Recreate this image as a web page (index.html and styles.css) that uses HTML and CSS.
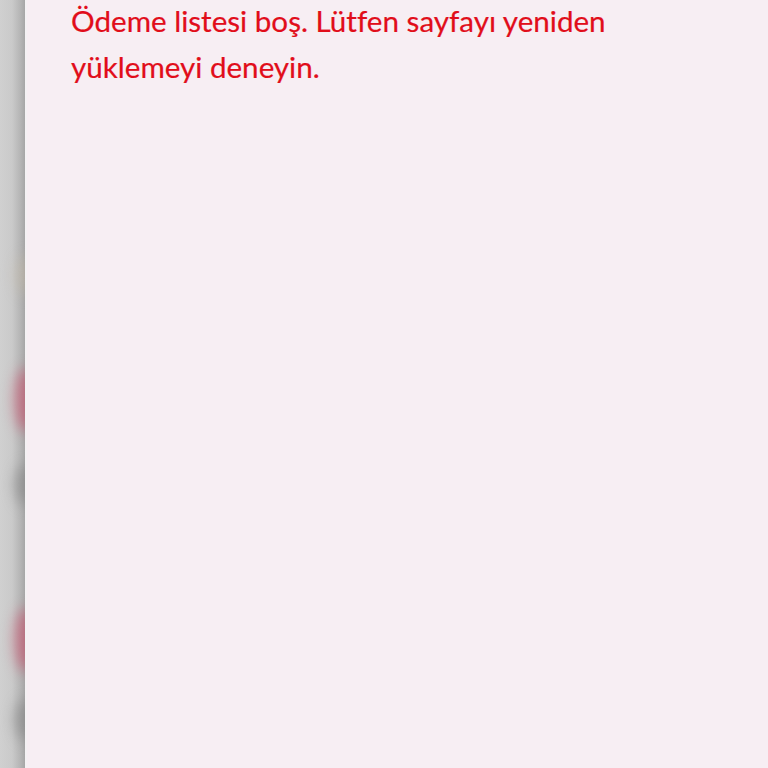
FILE: index.html
```html
<!DOCTYPE html>
<html lang="tr">
<head>
<meta charset="utf-8">
<title>Ödeme</title>
<link rel="stylesheet" href="styles.css">
</head>
<body>
<div class="screen">
  <div class="backdrop">
    <div class="blob blob-beige"></div>
    <div class="blob blob-red"></div>
    <div class="blob blob-grey"></div>
    <div class="blob blob-red blob-red2"></div>
    <div class="blob blob-grey blob-grey2"></div>
  </div>
  <main class="panel">
    <p class="message">Ödeme listesi boş. Lütfen sayfayı yeniden yüklemeyi deneyin.</p>
  </main>
</div>
</body>
</html>
```
FILE: styles.css
```css
html, body {
  margin: 0;
  padding: 0;
  width: 768px;
  height: 768px;
  overflow: hidden;
}
.screen {
  display: flex;
  width: 768px;
  height: 768px;
}
.backdrop {
  width: 25px;
  flex: none;
  background: linear-gradient(to right, #d0d0d0 0px, #cacaca 12px, #b6b6b6 20px, #a6a6a6 25px);
  display: flex;
  flex-direction: column;
  align-items: flex-end;
  overflow: hidden;
}
.blob {
  width: 22px;
  filter: blur(7px);
  border-radius: 50%;
  margin-right: -12px;
}
.blob-beige {
  margin-top: 255px;
  height: 40px;
  background: rgba(200, 185, 160, 0.35);
}
.blob-red {
  margin-top: 73px;
  height: 64px;
  background: rgba(200, 70, 100, 0.6);
}
.blob-red2 {
  margin-top: 103px;
}
.blob-grey {
  margin-top: 33px;
  height: 40px;
  background: rgba(130, 130, 130, 0.6);
}
.blob-grey2 {
  margin-top: 28px;
}
.panel {
  flex: 1;
  background: #f7eef3;
  border-left: 2px solid #f4f1f3;
  padding: 0 20px 0 44px;
}
.message {
  margin: -2px 0 0 0;
  font-family: Lato, "Liberation Sans", sans-serif;
  font-size: 29.6px;
  line-height: 46px;
  color: #e10d1a;
  font-variant-ligatures: none;
  max-width: 600px;
  -webkit-text-stroke: 0.2px #e10d1a;
}
```
